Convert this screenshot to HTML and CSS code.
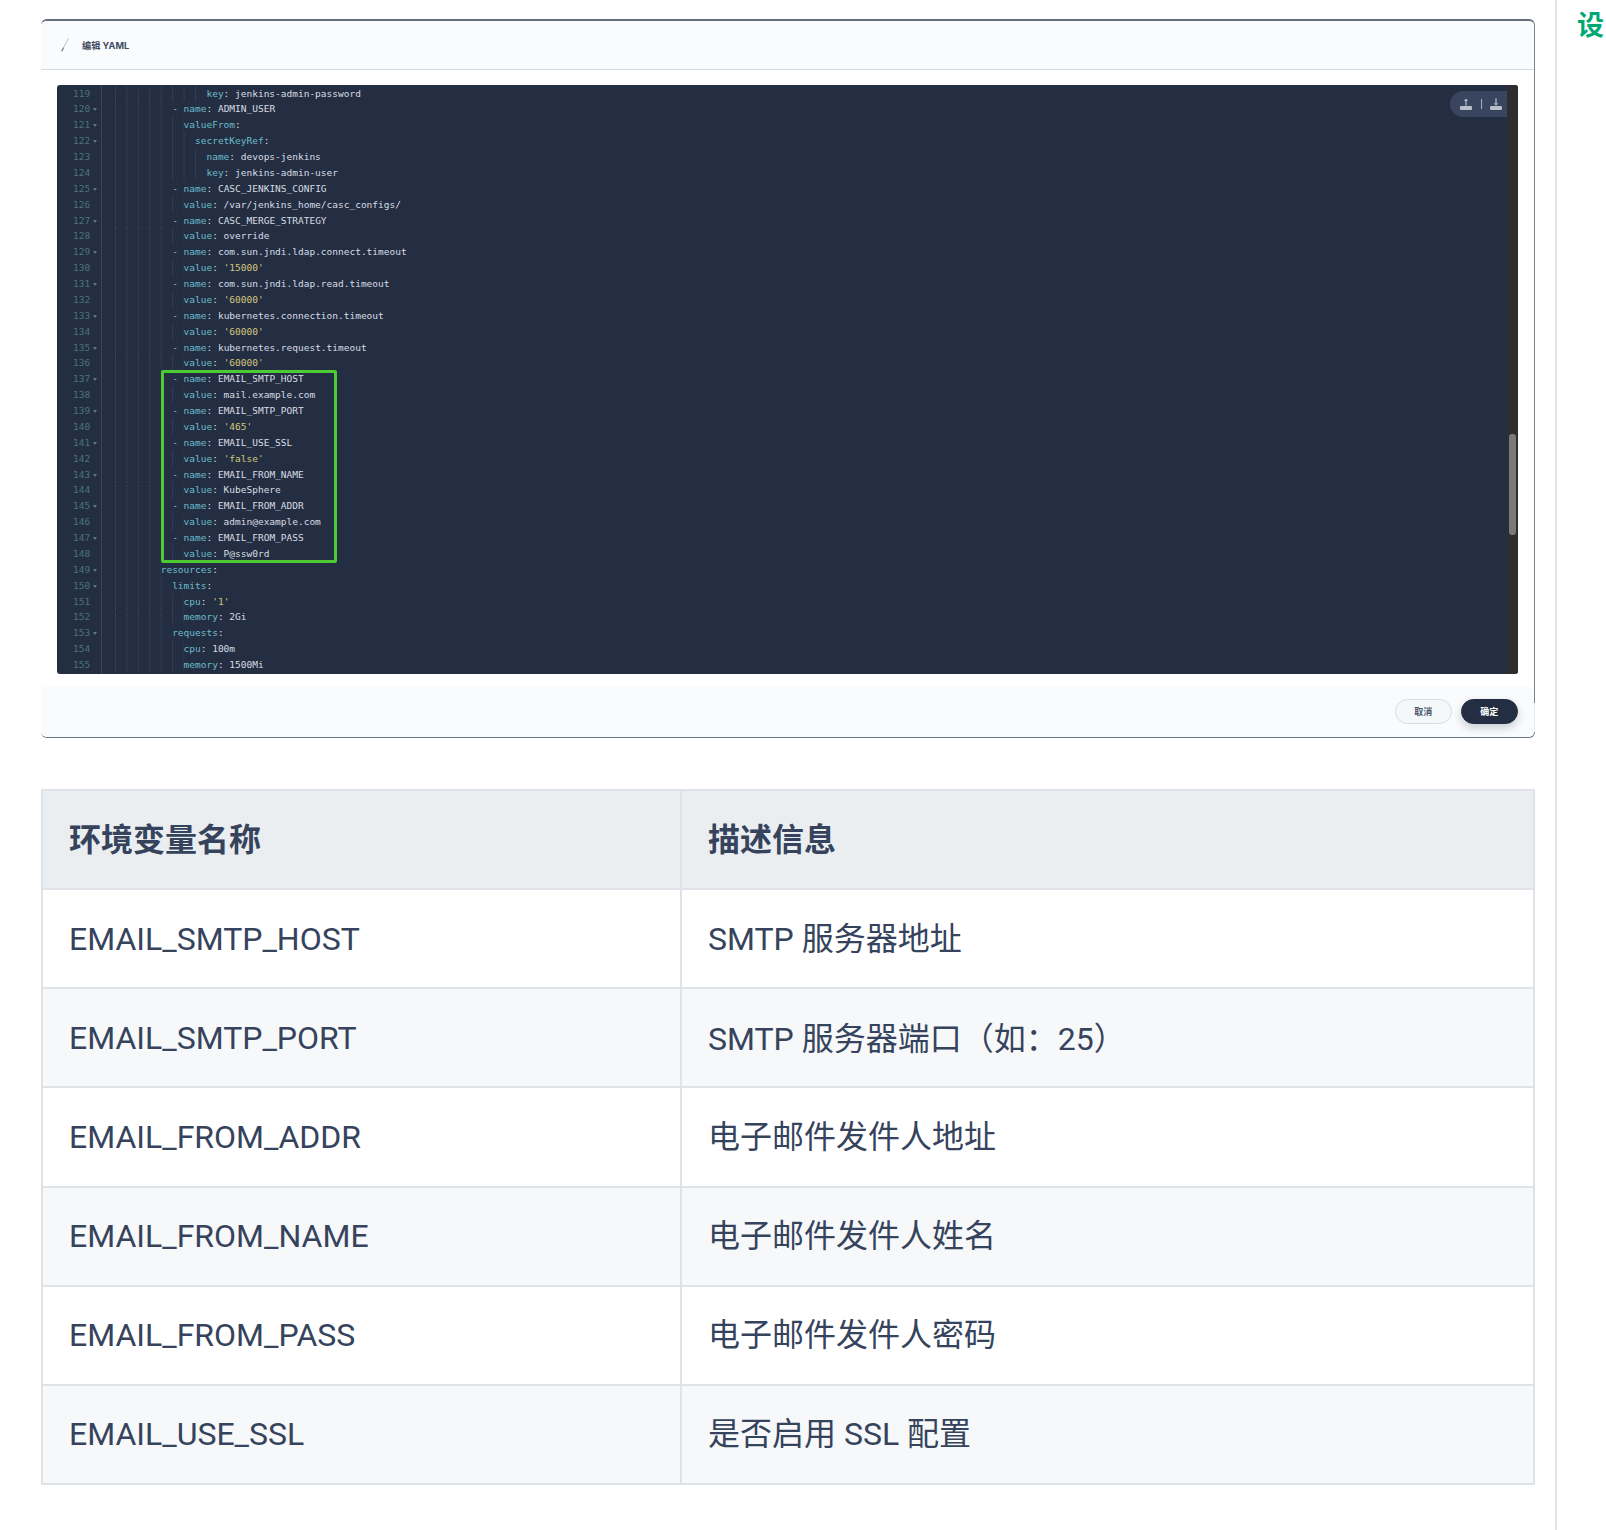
FILE: index.html
```html
<!DOCTYPE html>
<html lang="zh">
<head>
<meta charset="utf-8">
<title>编辑 YAML</title>
<link rel="stylesheet" href="styles.css">
</head>
<body>
<div class="page">
<main class="main">
<section class="panel">
<header class="panel-head">
<svg class="pen" width="12" height="16" viewBox="0 0 12 16"><path d="M9.5 1 L4.4 11" stroke="#bcc1ca" stroke-width="1"/><path d="M4.6 10.6 L2.6 14.4" stroke="#7b828e" stroke-width="1.2"/></svg>
<span class="panel-title">编辑 YAML</span>
</header>
<div class="editor">
<div class="code">
<div class="ln"><b>119</b><i class="i18"></i><u>key</u>: jenkins-admin-password</div>
<div class="ln f"><b>120</b><i class="i12"></i><s>- </s><u>name</u>: ADMIN_USER</div>
<div class="ln f"><b>121</b><i class="i14"></i><u>valueFrom</u>:</div>
<div class="ln f"><b>122</b><i class="i16"></i><u>secretKeyRef</u>:</div>
<div class="ln"><b>123</b><i class="i18"></i><u>name</u>: devops-jenkins</div>
<div class="ln"><b>124</b><i class="i18"></i><u>key</u>: jenkins-admin-user</div>
<div class="ln f"><b>125</b><i class="i12"></i><s>- </s><u>name</u>: CASC_JENKINS_CONFIG</div>
<div class="ln"><b>126</b><i class="i14"></i><u>value</u>: /var/jenkins_home/casc_configs/</div>
<div class="ln f"><b>127</b><i class="i12"></i><s>- </s><u>name</u>: CASC_MERGE_STRATEGY</div>
<div class="ln"><b>128</b><i class="i14"></i><u>value</u>: override</div>
<div class="ln f"><b>129</b><i class="i12"></i><s>- </s><u>name</u>: com.sun.jndi.ldap.connect.timeout</div>
<div class="ln"><b>130</b><i class="i14"></i><u>value</u>: <em>'15000'</em></div>
<div class="ln f"><b>131</b><i class="i12"></i><s>- </s><u>name</u>: com.sun.jndi.ldap.read.timeout</div>
<div class="ln"><b>132</b><i class="i14"></i><u>value</u>: <em>'60000'</em></div>
<div class="ln f"><b>133</b><i class="i12"></i><s>- </s><u>name</u>: kubernetes.connection.timeout</div>
<div class="ln"><b>134</b><i class="i14"></i><u>value</u>: <em>'60000'</em></div>
<div class="ln f"><b>135</b><i class="i12"></i><s>- </s><u>name</u>: kubernetes.request.timeout</div>
<div class="ln"><b>136</b><i class="i14"></i><u>value</u>: <em>'60000'</em></div>
<div class="ln f"><b>137</b><i class="i12"></i><s>- </s><u>name</u>: EMAIL_SMTP_HOST</div>
<div class="ln"><b>138</b><i class="i14"></i><u>value</u>: mail.example.com</div>
<div class="ln f"><b>139</b><i class="i12"></i><s>- </s><u>name</u>: EMAIL_SMTP_PORT</div>
<div class="ln"><b>140</b><i class="i14"></i><u>value</u>: <em>'465'</em></div>
<div class="ln f"><b>141</b><i class="i12"></i><s>- </s><u>name</u>: EMAIL_USE_SSL</div>
<div class="ln"><b>142</b><i class="i14"></i><u>value</u>: <em>'false'</em></div>
<div class="ln f"><b>143</b><i class="i12"></i><s>- </s><u>name</u>: EMAIL_FROM_NAME</div>
<div class="ln"><b>144</b><i class="i14"></i><u>value</u>: KubeSphere</div>
<div class="ln f"><b>145</b><i class="i12"></i><s>- </s><u>name</u>: EMAIL_FROM_ADDR</div>
<div class="ln"><b>146</b><i class="i14"></i><u>value</u>: admin@example.com</div>
<div class="ln f"><b>147</b><i class="i12"></i><s>- </s><u>name</u>: EMAIL_FROM_PASS</div>
<div class="ln"><b>148</b><i class="i14"></i><u>value</u>: P@ssw0rd</div>
<div class="ln f"><b>149</b><i class="i10"></i><u>resources</u>:</div>
<div class="ln f"><b>150</b><i class="i12"></i><u>limits</u>:</div>
<div class="ln"><b>151</b><i class="i14"></i><u>cpu</u>: <em>'1'</em></div>
<div class="ln"><b>152</b><i class="i14"></i><u>memory</u>: 2Gi</div>
<div class="ln f"><b>153</b><i class="i12"></i><u>requests</u>:</div>
<div class="ln"><b>154</b><i class="i14"></i><u>cpu</u>: 100m</div>
<div class="ln"><b>155</b><i class="i14"></i><u>memory</u>: 1500Mi</div>
<div class="mark"></div>
<div class="tools">
<svg width="14" height="14" viewBox="0 0 14 14"><path d="M7 1.5 L5 4 H6.4 V8.8 H7.6 V4 H9 Z" fill="#b9bfca"/><rect x="1" y="9" width="12" height="4" rx="1" fill="#b9bfca"/></svg>
<span class="tool-sep"></span>
<svg width="14" height="14" viewBox="0 0 14 14"><path d="M7 8.8 L5 6.2 H6.4 V1.2 H7.6 V6.2 H9 Z" fill="#b9bfca"/><rect x="1" y="9" width="12" height="4" rx="1" fill="#b9bfca"/></svg>
</div>
</div>
<div class="scroll"><div class="thumb"></div></div>
</div>
<footer class="panel-foot">
<button class="btn">取消</button>
<button class="btn primary">确定</button>
</footer>
</section>
<table class="env">
<thead>
<tr><th class="c1">环境变量名称</th><th>描述信息</th></tr>
</thead>
<tbody>
<tr><td>EMAIL_SMTP_HOST</td><td>SMTP 服务器地址</td></tr>
<tr><td>EMAIL_SMTP_PORT</td><td>SMTP 服务器端口（如<span class="colon">：</span>25）</td></tr>
<tr><td>EMAIL_FROM_ADDR</td><td>电子邮件发件人地址</td></tr>
<tr><td>EMAIL_FROM_NAME</td><td>电子邮件发件人姓名</td></tr>
<tr><td>EMAIL_FROM_PASS</td><td>电子邮件发件人密码</td></tr>
<tr><td>EMAIL_USE_SSL</td><td>是否启用 SSL 配置</td></tr>
</tbody>
</table>
</main>
<aside class="aside"><span class="aside-title">设</span></aside>
</div>
</body>
</html>
```
FILE: styles.css
```css
* { box-sizing: border-box; }
html, body { margin: 0; height: 1530px; overflow: hidden; background: #fff; }
.page { display: flex; height: 1530px; font-family: Roboto, "Noto Sans CJK SC", sans-serif; color: #36435c; }
.main { width: 1555px; flex: none; padding: 19px 20px 0 41px; }
.aside { flex: 1; min-width: 0; overflow: hidden; border-left: 2px solid #e0e5ea; padding: 6px 0 0 20px; white-space: nowrap; }
.aside-title { font-size: 27px; line-height: 40px; font-weight: 700; color: #00a971; }

.panel { width: 1494px; height: 719px; border-top: 2px solid #646b7a; border-right: 1px solid #7b8290; border-bottom: 1px solid #6b7484; border-radius: 6px; background: #fff; display: flex; flex-direction: column; }
.panel-head { height: 49px; flex: none; display: flex; align-items: center; gap: 11px; padding: 0 0 0 18px; background: #f9fbfd; border-bottom: 1px solid #d5d9e0; border-radius: 6px 6px 0 0; }
.pen { flex: none; }
.panel-title { font-size: 9.2px; font-weight: 700; color: #3e4a5e; font-family: Inter, "Noto Sans CJK SC", sans-serif; }

.editor { margin: 15px 16px 0 16px; height: 589px; flex: none; display: flex; background: #242e42; border-radius: 3px; overflow: hidden; }
.code { position: relative; flex: 1; min-width: 0; font-family: "DejaVu Sans Mono", monospace; font-size: 9.5px; color: #d8dde4; padding-top: 0.6px; background: linear-gradient(90deg, transparent 44px, #38445a 44px, #38445a 45px, transparent 45px); }
.ln { position: relative; display: flex; height: 15.885px; line-height: 15.885px; white-space: pre; }
.ln b { flex: none; width: 44px; padding-left: 16px; font-weight: 400; color: #4a7479; letter-spacing: 0; }
.ln.f::before { content: ""; position: absolute; left: 36px; top: 7px; border-left: 2px solid transparent; border-right: 2px solid transparent; border-top: 3.5px solid #5a7a80; }
.ln i { flex: none; margin-left: calc(2ch + 2.5px); margin-right: 0; height: 100%; background: linear-gradient(90deg, #3f4c63 1px, transparent 1px) 0 0 / 2ch 100%; -webkit-mask: linear-gradient(#000 50%, transparent 50%) 0 0 / 100% 2px; mask: linear-gradient(#000 50%, transparent 50%) 0 0 / 100% 2px; }
.ln .i10 { width: 8ch; }
.ln .i12 { width: 10ch; }
.ln .i14 { width: 12ch; }
.ln .i16 { width: 14ch; }
.ln .i18 { width: 16ch; }
.ln u { text-decoration: none; color: #6bbccb; }
.ln s { text-decoration: none; color: #a9b0bc; }
.ln em { font-style: normal; color: #d3c67c; }

.mark { position: absolute; left: 104px; top: 285px; width: 176px; height: 193px; border: 3px solid #4ccb33; border-radius: 2px; }
.tools { position: absolute; right: 0; top: 6px; width: 57px; height: 26px; padding: 0 4px 0 9px; display: flex; align-items: center; justify-content: space-between; background: #39445e; border-radius: 13px 0 0 13px; }
.tool-sep { width: 1px; height: 10px; background: #a8aebb; }
.scroll { flex: none; width: 11px; background: #2e2e2e; position: relative; }
.thumb { position: absolute; left: 2px; right: 2px; top: 349px; height: 101px; border-radius: 3px; background: #7a7a7a; }

.panel-foot { position: relative; margin-top: 13px; flex: 1; display: flex; align-items: center; justify-content: flex-end; gap: 8.5px; padding: 0 16px 2px 0; background: #f9fbfd; border-radius: 0 0 6px 6px; }
.panel-foot::after { content: ""; position: absolute; right: -1px; top: 16px; bottom: 5px; width: 1px; background: #e3e6ea; }
.btn { width: 57.5px; height: 25px; padding: 0; border-radius: 13px; border: 1px solid #d6dde6; background: #f5f8fb; color: #4f5a6e; font: 700 9px "Noto Sans CJK SC", sans-serif; }
.btn.primary { background: #242e42; border-color: #242e42; color: #fff; box-shadow: 0 4px 8px rgba(36,46,66,.22); }

.env { margin-top: 51px; width: 1494px; table-layout: fixed; border-collapse: collapse; font-size: 32px; line-height: 40px; }
.env th, .env td { height: 99.15px; padding: 0 26px; text-align: left; border: 2px solid #dfe2e6; }
.env th { background: #ebeef1; font-weight: 700; }
.env .c1 { width: 639px; }
.env td { font-weight: 400; }
.env tbody tr:nth-child(even) td { background: #f6f8fa; }
.colon { font-family: "Noto Sans CJK TC", sans-serif; }
```
